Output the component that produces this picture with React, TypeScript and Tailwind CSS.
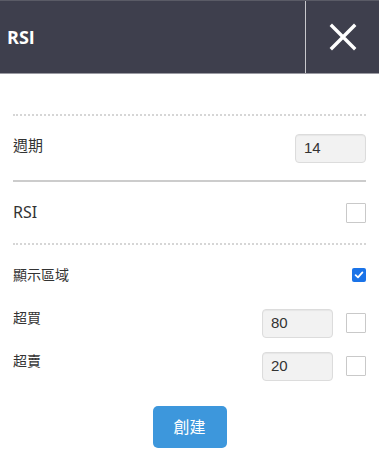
import React from "react";

function Box({ checked = false }: { checked?: boolean }) {
  if (checked) {
    return (
      <div className="w-[14px] h-[14px] rounded-[2px] bg-[#1a73e8] flex items-center justify-center">
        <svg width="10" height="10" viewBox="0 0 10 10">
          <path d="M1.6 5.2 L4 7.4 L8.4 2.4" fill="none" stroke="#fff" strokeWidth="1.8" strokeLinecap="round" strokeLinejoin="round" />
        </svg>
      </div>
    );
  }
  return <div className="w-[20px] h-[20px] border border-[#c9c9c9] bg-white rounded-[1px]" />;
}

function Field({ value, w }: { value: string; w: string }) {
  return (
    <div
      className={`${w} h-[29px] bg-[#f2f2f2] border border-[#dcdcdc] rounded-[4px] flex items-center pl-[8px] text-[15px] text-[#333] shadow-[inset_0_1px_1px_rgba(0,0,0,0.05)]`}
      style={{ fontFamily: '"Liberation Sans", Arial, sans-serif' }}
    >
      {value}
    </div>
  );
}

export default function App() {
  const label = { fontFamily: '"Noto Sans", "Noto Sans CJK TC", sans-serif' };
  return (
    <div className="w-[379px] h-[473px] bg-white overflow-hidden" style={label}>
      <div className="h-[74px] bg-[#3e3f4d] border-t border-[#5a5b66] border-b border-b-[#9a9aa2] flex">
        <div className="flex-1 flex items-center pl-[7px] text-white text-[18px] font-bold" style={{ fontFamily: '"Open Sans", sans-serif' }}>
          RSI
        </div>
        <div className="w-[74px] border-l border-[#c8c8cc] flex items-center justify-center">
          <svg width="28" height="28" viewBox="0 0 28 28">
            <path d="M3 3 L25 25 M25 3 L3 25" stroke="#fff" strokeWidth="3.4" strokeLinecap="square" />
          </svg>
        </div>
      </div>
      <div className="px-[13px]">
        <div className="h-[40px]" />
        <div className="border-t-2 border-dotted border-[#d6d6d6]" />
        <div className="h-[64px] flex items-center justify-between">
          <span className="text-[15px] text-[#333] -mt-[6px]">週期</span>
          <Field value="14" w="w-[71px]" />
        </div>
        <div className="border-t-2 border-[#cccccc]" />
        <div className="h-[61px] flex items-center justify-between">
          <span className="text-[16px] text-[#333] -mt-[2px]">RSI</span>
          <Box />
        </div>
        <div className="border-t-2 border-dotted border-[#d6d6d6]" />
        <div className="h-[56px] flex items-center justify-between pt-[4px]">
          <span className="text-[14px] text-[#333] -mt-[2px]">顯示區域</span>
          <Box checked />
        </div>
        <div className="h-[44px] flex items-center justify-between">
          <span className="text-[14px] text-[#333] -mt-[12px]">超買</span>
          <div className="flex items-center gap-[13px]">
            <Field value="80" w="w-[71px]" />
            <Box />
          </div>
        </div>
        <div className="h-[42px] flex items-center justify-between">
          <span className="text-[14px] text-[#333] -mt-[12px]">超賣</span>
          <div className="flex items-center gap-[13px]">
            <Field value="20" w="w-[71px]" />
            <Box />
          </div>
        </div>
        <div className="flex justify-center pt-[19px]">
          <button className="w-[74px] h-[42px] rounded-[5px] bg-[#3d97dc] text-white text-[16px]">創建</button>
        </div>
      </div>
    </div>
  );
}
